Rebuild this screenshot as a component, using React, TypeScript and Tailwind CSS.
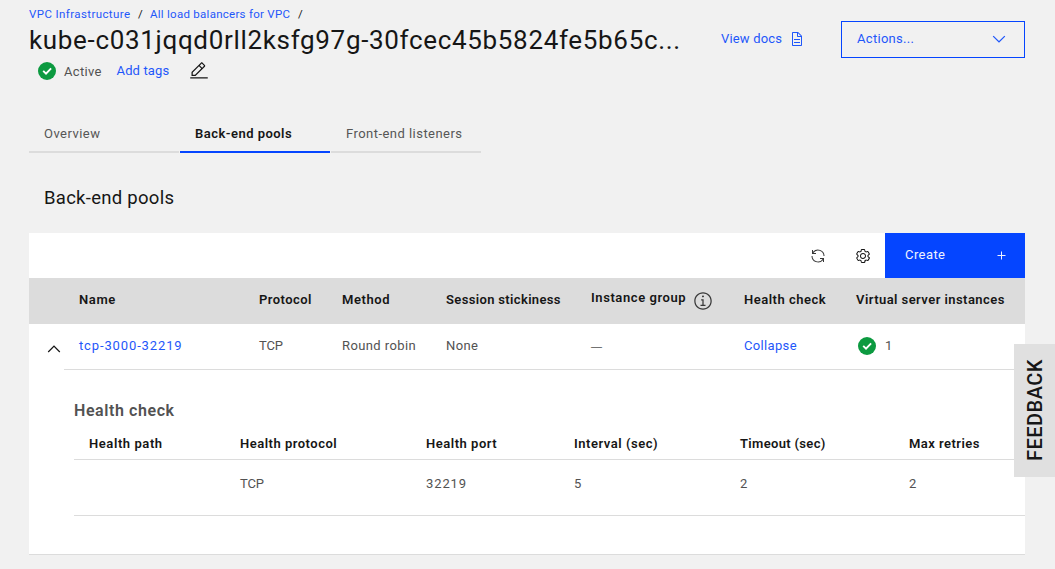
import React from "react";

type IconProps = { className: string; d: string; box?: number };

function Icon({ className, d, box = 16 }: IconProps) {
  return (
    <svg viewBox={`0 0 ${box} ${box}`} className={`block shrink-0 ${className}`} fill="currentColor" aria-hidden="true">
      <path fillRule="evenodd" d={d} />
    </svg>
  );
}

function StatusIcon() {
  return (
    <svg viewBox="0 0 18 18" className="block size-[18px] shrink-0" fill="none" aria-hidden="true">
      <circle cx="9" cy="9" r="9" fill="#0c9a40" />
      <path d="M5.2 8.9l2.8 2.7 5.1-5.2" stroke="#fff" strokeWidth="1.9" />
    </svg>
  );
}

const icons = {
  chevronDown: "M8 11L3 6 3.7 5.3 8 9.6 12.3 5.3 13 6z",
  chevronUp: "M8 5L13 10 12.3 10.7 8 6.4 3.7 10.7 3 10z",
  edit: "M2 26H30V28H2z M25.4 9c.8-.8.8-2 0-2.8l-3.6-3.6c-.8-.8-2-.8-2.8 0l-15 15V24h6.4L25.4 9zM20.4 4L24 7.6l-3 3L17.4 7 20.4 4zM6 22v-3.6l10-10 3.6 3.6-10 10H6z",
  document:
    "M25.7 9.3l-7-7C18.5 2.1 18.3 2 18 2H8C6.9 2 6 2.9 6 4v24c0 1.1.9 2 2 2h16c1.1 0 2-.9 2-2V10C26 9.7 25.9 9.5 25.7 9.3zM18 4.4l5.6 5.6H18V4.4zM24 28H8V4h8v6c0 1.1.9 2 2 2h6V28z M10 22H22V24H10z M10 16H22V18H10z",
  renew:
    "M12 10H6.78A11 11 0 0 1 27 16h2A13 13 0 0 0 6 7.68V4H4v8h8ZM20 22h5.22A11 11 0 0 1 5 16H3a13 13 0 0 0 23 8.32V28h2V20H20Z",
  settings:
    "M13.5 8.4c0-.1 0-.3 0-.4 0-.1 0-.3 0-.4l1-.8c.4-.3.4-.9.2-1.3l-1.2-2C13.3 3.2 13 3 12.6 3c-.1 0-.2 0-.3.1l-1.2.4c-.2-.1-.4-.3-.7-.4l-.3-1.3C10.1 1.3 9.7 1 9.2 1H6.8c-.5 0-.9.3-1 .8L5.6 3.1C5.3 3.2 5.1 3.3 4.9 3.4L3.7 3C3.6 3 3.5 3 3.4 3 3 3 2.7 3.2 2.5 3.5l-1.2 2C1.1 5.9 1.2 6.4 1.6 6.8l.9.9c0 .1 0 .3 0 .4 0 .1 0 .3 0 .4L1.6 9.2c-.4.3-.5.9-.2 1.3l1.2 2C2.7 12.8 3 13 3.4 13c.1 0 .2 0 .3-.1l1.2-.4c.2.1.4.3.7.4l.3 1.3c.1.5.5.8 1 .8h2.4c.5 0 .9-.3 1-.8l.3-1.3c.2-.1.4-.2.7-.4l1.2.4c.1 0 .2.1.3.1.4 0 .7-.2.9-.5l1.1-2c.2-.4.2-.9-.2-1.3L13.5 8.4zM12.6 12l-1.7-.6c-.4.3-.9.6-1.4.8L9.2 14H6.8l-.4-1.8c-.5-.2-.9-.5-1.4-.8L3.4 12l-1.2-2 1.4-1.2c-.1-.5-.1-1.1 0-1.6L2.2 6l1.2-2 1.7.6C5.5 4.2 6 4 6.5 3.8L6.8 2h2.4l.4 1.8c.5.2.9.5 1.4.8L12.6 4l1.2 2-1.4 1.2c.1.5.1 1.1 0 1.6l1.4 1.2L12.6 12z M8 11c-1.7 0-3-1.3-3-3s1.3-3 3-3 3 1.3 3 3C11 9.6 9.7 11 8 11zM8 6C6.9 6 6 6.8 6 7.9v.1c0 1.1.8 2 1.9 2h.1c1.1 0 2-.8 2-1.9V8C10 6.9 9.2 6 8 6z",
  info: "M8.5 11V6.5h-2v1h1V11H6v1h4v-1zM8 3.5c-.4 0-.8.3-.8.8S7.6 5 8 5c.4 0 .8-.3.8-.8S8.4 3.5 8 3.5zM8 15c-3.9 0-7-3.1-7-7s3.1-7 7-7 7 3.1 7 7S11.9 15 8 15zM8 2C4.7 2 2 4.7 2 8s2.7 6 6 6 6-2.7 6-6S11.3 2 8 2z",
};

function Header() {
  return (
    <header className="flex h-[86px] pt-1.5">
      <div className="w-[692px]">
        <nav className="flex h-[18px] text-[11.5px] leading-4 whitespace-pre text-[#1f57fa]">
          <a className="w-[109px] tracking-[0.4px]">VPC Infrastructure</a>
          <span className="w-3 text-[#161616]">/</span>
          <a className="w-[148px] tracking-[0.27px]">All load balancers for VPC</a>
          <span className="text-[#161616]">/</span>
        </nav>
        <h1 className="text-[26px] leading-8 tracking-[0.67px] whitespace-nowrap text-[#161616]">
          kube-c031jqqd0rll2ksfg97g-30fcec45b5824fe5b65c...
        </h1>
        <div className="flex h-[30px] items-start pl-[9px]">
          <span className="mt-1.5">
            <StatusIcon />
          </span>
          <span className="mt-1.5 ml-2 w-[52.5px] tracking-[0.34px] text-[#525252]">Active</span>
          <a className="mt-[5px] w-[72.5px] tracking-[0.15px] text-[#1f57fa]">Add tags</a>
          <Icon className="mt-[5px] size-5 text-[#161616]" box={32} d={icons.edit} />
        </div>
      </div>
      <a className="mt-[23px] flex h-5 w-[120px] tracking-[0.18px] text-[#1f57fa]">
        <span className="w-[68px]">View docs</span>
        <Icon className="mt-[2px] size-4" box={32} d={icons.document} />
      </a>
      <button className="mt-[15px] flex h-[37px] w-[184px] justify-between border border-[#0545ff] pt-[7px] pr-[15px] pl-[15px] tracking-[0.3px] text-[#1f57fa]">
        <span>Actions...</span>
        <Icon className="size-5" d={icons.chevronDown} />
      </button>
    </header>
  );
}

function Tabs() {
  return (
    <nav className="mt-[29px] flex h-[38px] gap-px text-[#565656]">
      <a className="w-[150px] border-b-2 border-[#dcdcdc] pt-[9px] pl-[15px] tracking-[0.47px]">Overview</a>
      <a className="w-[150px] border-b-2 border-[#0545ff] pt-[9px] pl-[15px] font-semibold tracking-[0.47px] text-[#161616]">
        Back-end pools
      </a>
      <a className="w-[150px] border-b-2 border-[#dcdcdc] pt-[9px] pl-[15px] tracking-[0.46px]">Front-end listeners</a>
    </nav>
  );
}

function Toolbar() {
  return (
    <div className="flex h-[45px] justify-end">
      <button className="flex w-[45px] items-center justify-center text-[#393939]">
        <Icon className="size-4" box={32} d={icons.renew} />
      </button>
      <button className="flex w-[45px] items-center justify-center text-[#161616]">
        <Icon className="size-4" d={icons.settings} />
      </button>
      <button className="flex w-[140px] justify-between bg-[#0545ff] pt-3 pr-[19px] pl-5 text-[#eef2ff]">
        <span className="tracking-[0.43px]">Create</span>
        <svg viewBox="0 0 9 9" className="mt-[6px] size-[9px]" stroke="currentColor" aria-hidden="true">
          <path d="M4.5 .5v8M.5 4.5h8" />
        </svg>
      </button>
    </div>
  );
}

function PoolsTable() {
  return (
    <div role="table">
      <div
        role="row"
        className="grid h-[46px] grid-cols-[50px_180px_83px_104px_145px_153px_112px_169px] bg-[#dcdcdc] pt-3 font-semibold whitespace-nowrap text-[#161616]"
      >
        <span />
        <span className="tracking-[0.6px]">Name</span>
        <span className="tracking-[0.46px]">Protocol</span>
        <span className="tracking-[0.57px]">Method</span>
        <span className="tracking-[0.35px]">Session stickiness</span>
        <span className="-mt-0.5 flex tracking-[0.58px]">
          <span className="w-[102px]">Instance group</span>
          <Icon className="mt-[3px] size-5 text-[#393939]" d={icons.info} />
        </span>
        <span className="tracking-[0.5px]">Health check</span>
        <span className="tracking-[0.44px]">Virtual server instances</span>
      </div>
      <div role="row" className="grid h-[45px] grid-cols-[50px_180px_83px_104px_145px_153px_112px_169px] pt-3 text-[#525252]">
        <button className="flex pt-[3px] pl-[15px] text-[#161616]">
          <Icon className="size-5" d={icons.chevronUp} />
        </button>
        <a className="tracking-[0.87px] text-[#1f57fa]">tcp-3000-32219</a>
        <span className="tracking-[-0.12px]">TCP</span>
        <span className="tracking-[0.4px]">Round robin</span>
        <span className="tracking-[0.41px]">None</span>
        <span className="font-['Liberation_Sans',sans-serif] text-[11px]">—</span>
        <a className="tracking-[0.34px] text-[#1f57fa]">Collapse</a>
        <span className="flex gap-[9px] pt-0 pl-[2px]">
          <span className="pt-px">
            <StatusIcon />
          </span>
          1
        </span>
      </div>
    </div>
  );
}

function HealthCheck() {
  return (
    <section className="ml-[35px] h-[185px] border-t border-[#dcdcdc] pt-[31px] pl-2.5">
      <h3 className="h-[33px] text-base leading-5 font-semibold tracking-[0.58px] text-[#525252]">Health check</h3>
      <div role="table">
        <div
          role="row"
          className="grid h-[26px] grid-cols-[151px_186px_148px_166px_169px_116px] border-b border-[#dcdcdc] pl-[15px] font-semibold text-[#161616]"
        >
          <span className="tracking-[0.58px]">Health path</span>
          <span className="tracking-[0.5px]">Health protocol</span>
          <span className="tracking-[0.52px]">Health port</span>
          <span className="tracking-[0.53px]">Interval (sec)</span>
          <span className="tracking-[0.33px]">Timeout (sec)</span>
          <span className="tracking-[0.46px]">Max retries</span>
        </div>
        <div
          role="row"
          className="grid h-14 grid-cols-[151px_186px_148px_166px_169px_116px] border-b border-[#dcdcdc] pt-3.5 pl-[15px] text-[#525252]"
        >
          <span />
          <span className="tracking-[-0.12px]">TCP</span>
          <span className="tracking-[0.9px]">32219</span>
          <span>5</span>
          <span>2</span>
          <span>2</span>
        </div>
      </div>
    </section>
  );
}

export default function App() {
  return (
    <main className="relative h-[569px] w-[1055px] overflow-hidden bg-[#f1f1f1] pr-[30px] pl-[29px] font-[Roboto,sans-serif] text-[13px] leading-5">
      <Header />
      <Tabs />
      <h2 className="h-20 pt-[33px] pl-[15px] text-[18.5px] leading-6 tracking-[0.28px] text-[#161616]">Back-end pools</h2>
      <section className="border-b border-[#dcdcdc] bg-white">
        <Toolbar />
        <PoolsTable />
        <HealthCheck />
      </section>
      <button className="absolute top-[344px] right-0 flex h-[133px] w-[41px] items-center justify-center bg-[#e0e0e0] text-xl font-medium tracking-[0.5px] text-[#161616]">
        <span className="rotate-180 [writing-mode:vertical-rl]">FEEDBACK</span>
      </button>
    </main>
  );
}
